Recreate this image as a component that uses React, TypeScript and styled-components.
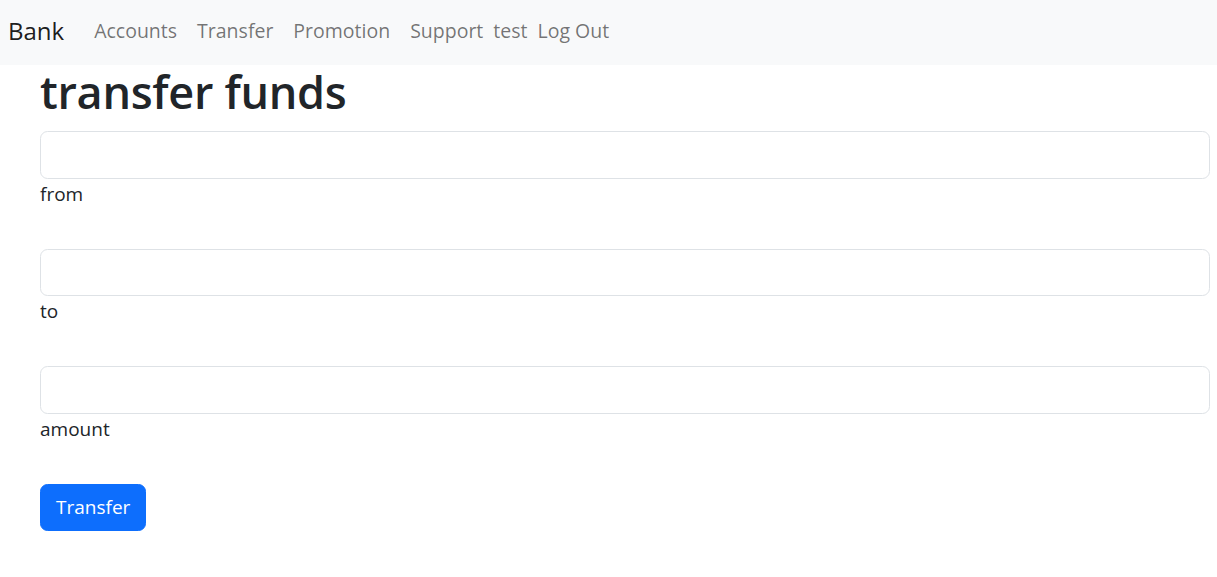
import React from "react";
import styled, { createGlobalStyle } from "styled-components";

const GlobalStyle = createGlobalStyle`
  html, body {
    margin: 0;
    padding: 0;
    background: #ffffff;
  }
  body {
    font-family: "Open Sans", "Noto Sans", "DejaVu Sans", sans-serif;
    color: #212529;
    font-size: 20px;
    line-height: 1.5;
  }
  * { box-sizing: border-box; }
`;

const NavBar = styled.nav`
  height: 65px;
  background: #f8f9fa;
  display: flex;
  align-items: center;
  padding: 0 8px 4px;
`;

const Brand = styled.a`
  font-size: 24px;
  line-height: 1.5;
  color: rgba(0, 0, 0, 0.9);
  text-decoration: none;
  margin-right: 20px;
`;

const NavList = styled.div`
  display: flex;
  align-items: center;
`;

const NavLink = styled.a<{ $pad?: number }>`
  font-size: 19.5px;
  color: rgba(0, 0, 0, 0.55);
  text-decoration: none;
  padding: 0 ${(p) => (p.$pad ?? 10)}px;
`;

const UserName = styled.span`
  font-size: 19.5px;
  color: rgba(0, 0, 0, 0.55);
`;

const Main = styled.main`
  padding: 0 7px 0 40px;
`;

const Title = styled.h1`
  margin: 0 0 12px;
  font-size: 45px;
  font-weight: 600;
  line-height: 1.2;
  color: #212529;
  letter-spacing: -0.3px;
`;

const Form = styled.form`
  display: flex;
  flex-direction: column;
`;

const Field = styled.div`
  margin-bottom: 40px;
`;

const Input = styled.input`
  display: block;
  width: 100%;
  height: 47.5px;
  border: 1px solid #dee2e6;
  border-radius: 7.5px;
  padding: 7.5px 15px;
  font: inherit;
  color: #212529;
  background: #fff;
  outline: none;
`;

const Label = styled.label`
  display: block;
  font-size: 19px;
  line-height: 30px;
  color: #212529;
`;

const Button = styled.button`
  align-self: flex-start;
  background: #0d6efd;
  color: #fff;
  border: 1px solid #0d6efd;
  border-radius: 7.5px;
  padding: 7.5px 15px;
  font-family: inherit;
  font-size: 19px;
  line-height: 30px;
  cursor: pointer;
`;

export default function App() {
  return (
    <>
      <GlobalStyle />
      <NavBar>
        <Brand href="#">Bank</Brand>
        <NavList>
          <NavLink href="#">Accounts</NavLink>
          <NavLink href="#">Transfer</NavLink>
          <NavLink href="#">Promotion</NavLink>
          <NavLink href="#">Support</NavLink>
          <UserName>test</UserName>
          <NavLink href="#">Log Out</NavLink>
        </NavList>
      </NavBar>
      <Main>
        <Title>transfer funds</Title>
        <Form onSubmit={(e) => e.preventDefault()}>
          <Field>
            <Input id="from" />
            <Label htmlFor="from">from</Label>
          </Field>
          <Field>
            <Input id="to" />
            <Label htmlFor="to">to</Label>
          </Field>
          <Field>
            <Input id="amount" />
            <Label htmlFor="amount">amount</Label>
          </Field>
          <Button type="submit">Transfer</Button>
        </Form>
      </Main>
    </>
  );
}
